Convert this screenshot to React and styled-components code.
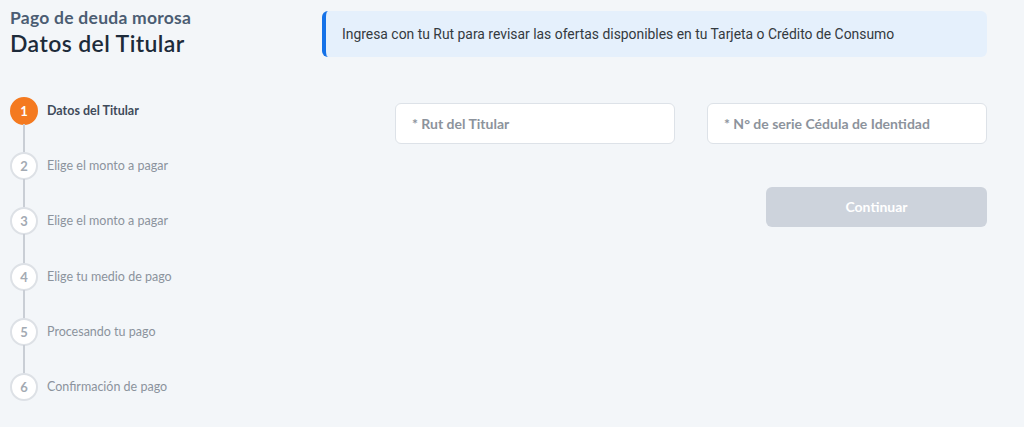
import React from "react";
import styled, { createGlobalStyle } from "styled-components";

const Global = createGlobalStyle`
  html, body { margin: 0; padding: 0; background: #f3f6f9; }
  body { font-family: "Lato", "Open Sans", sans-serif; }
  * { box-sizing: border-box; }
`;

const Page = styled.div`
  display: flex;
  width: 1024px;
  height: 427px;
  background: #f3f6f9;
`;

const Sidebar = styled.aside`
  width: 322px;
  padding: 7px 0 0 10px;
  display: flex;
  flex-direction: column;
`;

const Eyebrow = styled.div`
  font-size: 17.5px;
  font-weight: 700;
  letter-spacing: 0.25px;
  color: #4b5d73;
  line-height: 22px;
`;

const Title = styled.h1`
  margin: 0;
  font-size: 23px;
  font-weight: 600;
  letter-spacing: 0.4px;
  color: #1d2b3a;
  line-height: 28px;
`;

const Steps = styled.ol`
  list-style: none;
  margin: 40px 0 0;
  padding: 0;
`;

const Step = styled.li`
  position: relative;
  display: flex;
  align-items: flex-start;
  height: 55.2px;
  &:not(:last-child)::after {
    content: "";
    position: absolute;
    left: 13px;
    top: 27px;
    width: 2px;
    height: 30px;
    background: #c9ced5;
  }
`;

const Circle = styled.span`
  width: 28px;
  height: 28px;
  border-radius: 50%;
  flex-shrink: 0;
  display: flex;
  align-items: center;
  justify-content: center;
  font-size: 13px;
  font-weight: 700;
  background: ${(p) => (p.$active ? "#f47a20" : "#ffffff")};
  color: ${(p) => (p.$active ? "#ffffff" : "#a3aab3")};
  border: 2px solid ${(p) => (p.$active ? "#f47a20" : "#dde1e6")};
`;

const StepLabel = styled.span`
  margin-left: 9px;
  line-height: 28px;
  font-size: 12.5px;
  font-weight: ${(p) => (p.$active ? 700 : 400)};
  color: ${(p) => (p.$active ? "#3f4b5b" : "#8b939d")};
`;

const Main = styled.main`
  width: 665px;
  padding-top: 11px;
  display: flex;
  flex-direction: column;
`;

const Banner = styled.div`
  height: 46px;
  background: #e5f0fc;
  border-radius: 6px;
  border-left: 4px solid #1572e8;
  display: flex;
  align-items: center;
  padding-left: 16px;
  font-family: "Roboto", sans-serif;
  font-size: 13.9px;
  color: #343a40;
`;

const Form = styled.div`
  margin-top: 46px;
  padding-left: 73px;
  display: flex;
  flex-direction: column;
  align-items: flex-end;
`;

const Row = styled.div`
  display: flex;
  gap: 32px;
  width: 100%;
`;

const Input = styled.input`
  width: 280px;
  height: 41px;
  border: 1px solid #dde2e8;
  border-radius: 6px;
  background: #ffffff;
  padding: 0 16px;
  font-family: "Lato", sans-serif;
  font-size: 14px;
  font-weight: 700;
  color: #333;
  outline: none;
  &::placeholder { color: #8c939c; }
`;

const Button = styled.button`
  margin-top: 43px;
  width: 221px;
  height: 40px;
  border: none;
  border-radius: 6px;
  background: #cdd3dc;
  color: #ffffff;
  font-family: "Lato", sans-serif;
  font-size: 14px;
  font-weight: 700;
  padding-bottom: 2px;
`;

const steps = [
  "Datos del Titular",
  "Elige el monto a pagar",
  "Elige el monto a pagar",
  "Elige tu medio de pago",
  "Procesando tu pago",
  "Confirmación de pago",
];

export default function App() {
  return (
    <>
      <Global />
      <Page>
        <Sidebar>
          <Eyebrow>Pago de deuda morosa</Eyebrow>
          <Title>Datos del Titular</Title>
          <Steps>
            {steps.map((s, i) => (
              <Step key={i}>
                <Circle $active={i === 0}>{i + 1}</Circle>
                <StepLabel $active={i === 0}>{s}</StepLabel>
              </Step>
            ))}
          </Steps>
        </Sidebar>
        <Main>
          <Banner>
            Ingresa con tu Rut para revisar las ofertas disponibles en tu Tarjeta o Crédito de Consumo
          </Banner>
          <Form>
            <Row>
              <Input placeholder="* Rut del Titular" />
              <Input placeholder="* N° de serie Cédula de Identidad" />
            </Row>
            <Button disabled>Continuar</Button>
          </Form>
        </Main>
      </Page>
    </>
  );
}
